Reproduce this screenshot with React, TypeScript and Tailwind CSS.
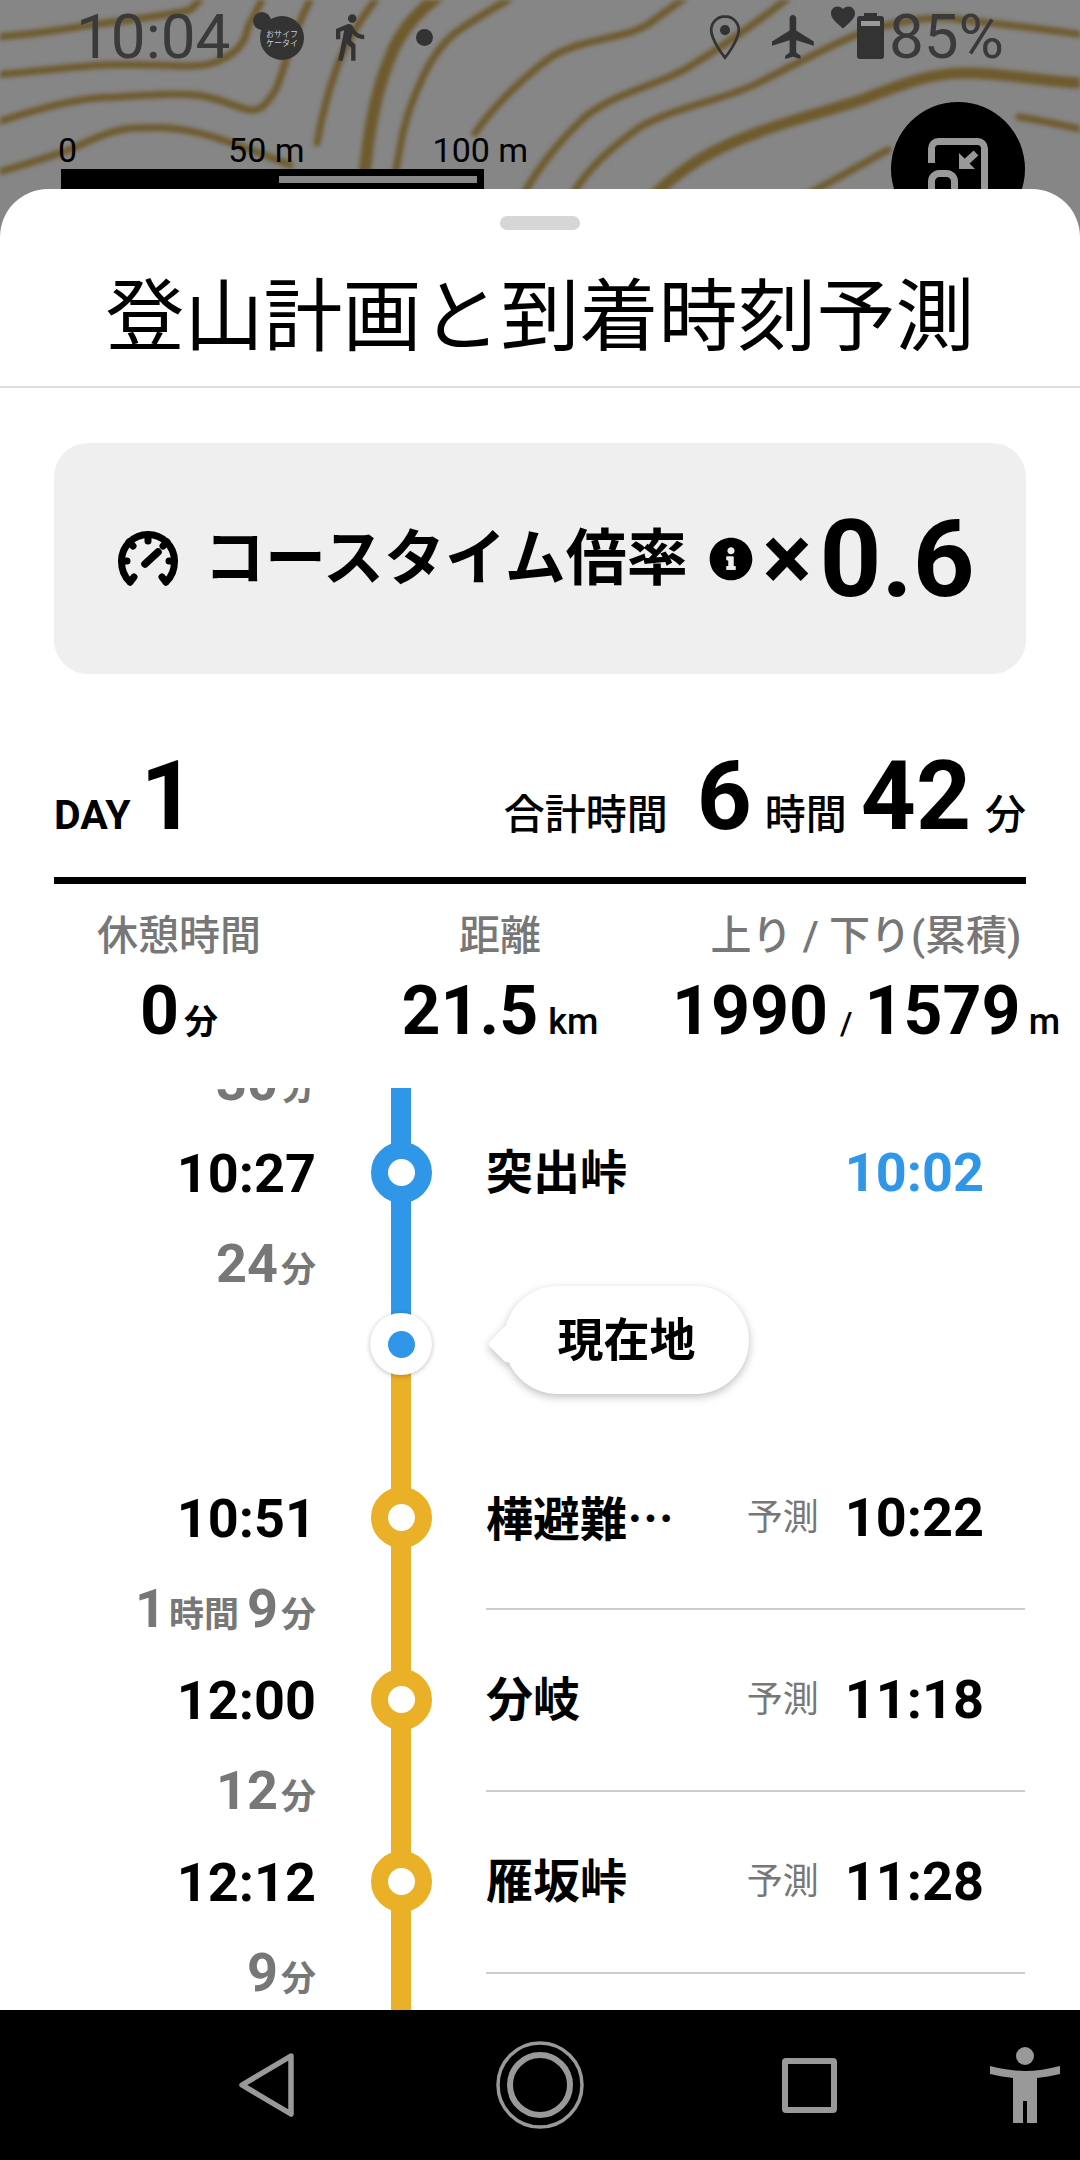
import React from "react";
import { FaInfoCircle } from "react-icons/fa";

type Stop = { arrive: string; name: string; predicted: string; blue?: boolean; more?: boolean };
type Part = { value?: string; unit?: string };

function Duration({ parts, color, divider }: { parts: Part[]; color: string; divider?: boolean }) {
    return (
        <div className="flex h-[91px] items-center">
            <div className="flex w-[316px] items-baseline justify-end pt-[4px] text-[#777777]">
                {parts.map((p, i) => (
                    <span key={i} className="flex items-baseline">
                        <span className="text-[54px] leading-[60px] font-bold">{p.value}</span>
                        <span className="ml-[3px] text-[35px] font-bold">{p.unit}</span>
                        {i < parts.length - 1 && <span className="w-[8px]" />}
                    </span>
                ))}
            </div>
            <div className="relative h-full w-[170px]">
                <div className={`absolute inset-y-0 left-[75px] w-[20px] ${color}`} />
            </div>
            {divider && <div className="h-[2px] w-[539px] bg-[#cccccc]" />}
        </div>
    );
}

function StopRow({ stop }: { stop: Stop }) {
    const line = stop.blue ? "bg-[#2f96e8]" : "bg-[#e9b028]";
    const ring = stop.blue ? "border-[#2f96e8]" : "border-[#e9b028]";
    return (
        <div className="flex h-[91px] items-center">
            <div className="w-[316px] pt-[2px] text-right text-[54px] leading-[64px] font-bold text-black">{stop.arrive}</div>
            <div className="relative flex h-full w-[170px] items-center justify-center">
                <div className={`absolute inset-y-0 left-[75px] w-[20px] ${line}`} />
                <div className={`relative h-[61px] w-[61px] rounded-full border-[17px] bg-white ${ring}`} />
            </div>
            <div className="flex w-[539px] items-center pr-[41px]">
                <div className="text-[47px] leading-[60px] font-bold text-black">
                    {stop.name}
                    {stop.more && <span className="font-['Noto_Sans_CJK_JP',sans-serif]">…</span>}
                </div>
                {stop.blue ? (
                    <div className="ml-auto text-[54px] leading-[64px] font-bold text-[#2f96e8]">{stop.predicted}</div>
                ) : (
                    <>
                        <div className="ml-auto text-[36px] leading-[50px] text-[#777777]">予測</div>
                        <div className="ml-[26px] text-[54px] leading-[64px] font-bold text-black">{stop.predicted}</div>
                    </>
                )}
            </div>
        </div>
    );
}

function MapBackground() {
    return (
        <svg className="absolute inset-0 blur-[2px]" width="1080" height="240" viewBox="0 0 1080 240" fill="none" stroke="#6e5a2c" strokeWidth="7" strokeLinecap="round">
            <path d="M-5 123C40 108 80 97 117 97C150 95 190 92 207 97C235 103 250 116 262 107C275 95 278 85 282 73C290 45 300 20 310 0" />
            <path d="M-5 173C25 165 45 158 69 150C95 138 115 128 138 128C165 126 190 130 207 135C240 145 265 155 290 165" />
            <path d="M-5 37C30 35 60 30 90 25C130 20 170 15 190 10L200 0" />
            <path d="M-5 75C30 72 70 67 103 65C150 62 190 70 213 63C235 55 245 45 248 27L262 0" />
            <path d="M365 170C370 120 378 85 393 50C405 25 420 10 440 -5" strokeWidth="12" />
            <path d="M396 170C402 135 405 120 413 100C425 70 435 50 455 33C480 15 500 5 516 -5" />
            <path d="M317 143C322 115 328 92 337 67C347 40 360 20 379 -5" />
            <path d="M475 133C495 105 520 80 551 57C590 35 630 40 654 20L689 -5" />
            <path d="M523 195C540 165 560 140 585 117C615 92 660 85 689 67C725 45 760 20 792 -5" />
            <path d="M572 195C590 165 615 145 640 127C680 105 725 100 758 83C800 62 830 45 861 33C900 20 935 15 964 20C1010 25 1050 30 1085 35" />
            <path d="M654 195C675 175 695 160 723 147C770 125 815 115 861 100C900 85 930 73 964 73C1010 73 1050 83 1085 83" strokeWidth="11" />
            <path d="M806 195C835 180 860 165 888 150" />
            <path d="M1019 117C1040 120 1060 125 1085 130" />
        </svg>
    );
}

function BearIcon() {
    return (
        <svg width="52" height="50" viewBox="0 0 52 50" fill="#333333">
            <circle cx="10" cy="9" r="9" />
            <circle cx="30" cy="26" r="22" />
            <text x="30" y="25" textAnchor="middle" fill="#cccccc" fontSize="8" fontFamily="'Noto Sans CJK JP', sans-serif">おサイフ</text>
            <text x="30" y="34" textAnchor="middle" fill="#cccccc" fontSize="8" fontFamily="'Noto Sans CJK JP', sans-serif">ケータイ</text>
        </svg>
    );
}

function StatusBar() {
    return (
        <div className="relative flex h-[74px] items-center pl-[76px] pr-[76px] text-[62px] leading-[74px] text-[#3a3a3a]">
            <span>10:04</span>
            <span className="ml-[22px]"><BearIcon /></span>
            <svg className="ml-[19px]" width="52" height="52" viewBox="0 0 24 24" fill="#333333">
                <path d="M13.5 5.5c1.1 0 2-.9 2-2s-.9-2-2-2-2 .9-2 2 .9 2 2 2zM9.8 8.9L7 23h2.1l1.8-8 2.1 2v6h2v-7.5l-2.1-2 .6-3C14.8 12 16.8 13 19 13v-2c-1.9 0-3.5-1-4.3-2.4l-1-1.6c-.4-.6-1-1-1.7-1-.3 0-.5.1-.8.1L6 8.3V13h2V9.6l1.8-.7" />
            </svg>
            <div className="ml-[41px] h-[17px] w-[17px] rounded-full bg-[#333333]" />
            <div className="ml-auto flex items-center">
                <svg width="34" height="46" viewBox="5 2 14 20" fill="none" stroke="#333333" strokeWidth="1.2">
                    <path d="M12 3C8.7 3 6 5.7 6 9c0 4.6 6 12 6 12s6-7.4 6-12c0-3.3-2.7-6-6-6z" />
                    <circle cx="12" cy="9" r="2.2" fill="#333333" stroke="none" />
                </svg>
                <svg className="ml-[30px]" width="44" height="44" viewBox="2 2 20 20" fill="#333333">
                    <path d="M21 16v-2l-8-5V3.5c0-.83-.67-1.5-1.5-1.5S10 2.67 10 3.5V9l-8 5v2l8-2.5V19l-2 1.5V22l3.5-1 3.5 1v-1.5L13 19v-5.5l8 2.5z" />
                </svg>
                <div className="relative ml-[41px] h-[43px] w-[27px] rounded-[3px] bg-[#333333]">
                    <div className="absolute left-[7px] top-[-3px] h-[4px] w-[13px] bg-[#333333]" />
                    <div className="absolute left-[4px] top-[5px] h-[5px] w-[19px] bg-[#999999]" />
                    <svg className="absolute left-[-26px] top-[-10px]" width="24" height="24" viewBox="2 3 20 19" fill="#333333">
                        <path d="M12 21.35l-1.45-1.32C5.4 15.36 2 12.28 2 8.5 2 5.42 4.42 3 7.5 3c1.74 0 3.41.81 4.5 2.09C13.09 3.81 14.76 3 16.5 3 19.58 3 22 5.42 22 8.5c0 3.78-3.4 6.86-8.55 11.54L12 21.35z" />
                    </svg>
                </div>
                <span className="ml-[5px]">85%</span>
            </div>
        </div>
    );
}

function MapArea() {
    return (
        <div className="relative h-[240px] overflow-hidden bg-[#868686]">
            <MapBackground />
            <StatusBar />
            <div className="relative ml-[58px] mt-[58px] w-[480px] text-[34px] leading-[36px] text-black">
                <div className="flex">
                    <span>0</span>
                    <span className="ml-[151px]">50 m</span>
                    <span className="ml-[128px]">100 m</span>
                </div>
                <div className="ml-[3px] mt-[1px] flex h-[40px] w-[423px] justify-end bg-black pr-[7px] pt-[7px]">
                    <div className="h-[7px] w-[198px] bg-[#888888]" />
                </div>
            </div>
            <div className="absolute left-[891px] top-[102px] h-[134px] w-[134px] rounded-full bg-black">
                <svg width="134" height="134" viewBox="0 0 134 134" fill="none" stroke="#999999" strokeWidth="7" strokeLinejoin="round">
                    <path d="M40.5 61V46.5a7 7 0 0 1 7-7h39a7 7 0 0 1 7 7V110" />
                    <rect x="40.5" y="71.5" width="23" height="40" rx="8" />
                    <path d="M85 51L73 62" strokeWidth="7" />
                    <path d="M68 51V67H84Z" strokeWidth="0" fill="#999999" />
                </svg>
            </div>
        </div>
    );
}

function GaugeIcon() {
    return (
        <svg width="60" height="56" viewBox="0 0 60 56" fill="none" stroke="black" strokeLinecap="round">
            <path d="M12 51C6.5 46 3.5 38.5 3.5 30C3.5 15.4 15.4 3.5 30 3.5C44.6 3.5 56.5 15.4 56.5 30C56.5 38.5 53.5 46 48 51" strokeWidth="7" />
            <path d="M30 4V10M11 11L15 15M49 11L45 15M4 30H9M56 30H51M12 51L16 46M48 51L44 46" strokeWidth="7" />
            <path d="M27 33L40 21" strokeWidth="7.5" />
        </svg>
    );
}

function BottomNav() {
    return (
        <div className="flex h-[150px] items-center bg-black">
            <svg className="ml-[238px]" width="58" height="66" viewBox="0 0 58 66" fill="none" stroke="#999999" strokeWidth="5.5" strokeLinejoin="round">
                <path d="M53 4L4 33L53 62Z" />
            </svg>
            <svg className="ml-[200px]" width="88" height="88" viewBox="0 0 88 88" fill="none" stroke="#999999">
                <circle cx="44" cy="44" r="42" strokeWidth="3.5" />
                <circle cx="44" cy="44" r="30" strokeWidth="6" />
            </svg>
            <div className="ml-[198px] h-[55px] w-[55px] rounded-[4px] border-[6px] border-[#999999]" />
            <svg className="ml-[153px]" width="70" height="76" viewBox="0 0 70 76" fill="#999999">
                <ellipse cx="35" cy="9" rx="9" ry="9" />
                <path d="M0 19C12 22 24 24 35 24C46 24 58 22 70 19V27C62 29 54 30 47 31V76H37V54H33V76H23V31C16 30 8 29 0 27Z" />
            </svg>
        </div>
    );
}

export default function App() {
    const stops: Stop[] = [
        { arrive: "10:51", name: "樺避難", more: true, predicted: "10:22" },
        { arrive: "12:00", name: "分岐", predicted: "11:18" },
        { arrive: "12:12", name: "雁坂峠", predicted: "11:28" },
    ];
    const gaps: Part[][] = [
        [{ value: "1", unit: "時間" }, { value: "9", unit: "分" }],
        [{ value: "12", unit: "分" }],
        [{ value: "9", unit: "分" }],
    ];

    return (
        <div className="flex h-[2160px] w-[1080px] flex-col overflow-hidden bg-white font-['Roboto','Noto_Sans_CJK_JP',sans-serif]">
            <MapArea />
            <div className="relative z-10 mt-[-51px] flex min-h-0 flex-1 flex-col rounded-t-[48px] bg-white">
                <div className="mx-auto mt-[27px] h-[14px] w-[80px] rounded-full bg-[#d6d6d6]" />
                <div className="h-[156px] pt-[32px] text-center text-[79px] leading-[112px] text-black">登山計画と到着時刻予測</div>
                <div className="h-[2px] bg-[#dddddd]" />

                <div className="mx-[54px] mt-[55px] flex h-[231px] items-center rounded-[34px] bg-[#efefef] pl-[64px]">
                    <GaugeIcon />
                    <span className="ml-[26px] text-[61px] leading-[80px] font-bold text-black">コースタイム倍率</span>
                    <FaInfoCircle className="ml-[21px] text-[44px] text-black" />
                    <span className="ml-[10px] text-[92px] leading-[80px] font-bold text-black">×</span>
                    <span className="ml-[8px] text-[108px] leading-[120px] font-bold text-black">0.6</span>
                </div>

                <div className="mx-[54px] flex h-[210px] items-baseline border-b-[7px] border-black pt-[74px] text-black">
                    <span className="text-[41px] leading-[96px] font-bold">DAY</span>
                    <span className="ml-[10px] text-[96px] leading-[96px] font-bold">1</span>
                    <span className="ml-auto text-[41px] font-medium">合計時間</span>
                    <span className="ml-[29px] text-[96px] leading-[96px] font-bold">6</span>
                    <span className="ml-[13px] text-[41px] font-medium">時間</span>
                    <span className="ml-[14px] text-[96px] leading-[96px] font-bold">42</span>
                    <span className="ml-[14px] text-[41px] font-medium">分</span>
                </div>

                <div className="flex h-[204px] whitespace-nowrap pl-[54px] pt-[28px]">
                    <div className="w-[250px] text-center">
                        <div className="text-[41px] leading-[48px] font-medium text-[#777777]">休憩時間</div>
                        <div className="mt-[13px] text-[68px] leading-[76px] font-bold text-black">
                            0<span className="ml-[5px] text-[34px]">分</span>
                        </div>
                    </div>
                    <div className="ml-[36px] w-[320px] text-center">
                        <div className="text-[41px] leading-[48px] font-medium text-[#777777]">距離</div>
                        <div className="mt-[13px] text-[68px] leading-[76px] font-bold text-black">
                            21.5<span className="ml-[10px] text-[36px] font-medium">km</span>
                        </div>
                    </div>
                    <div className="w-[412px] text-center">
                        <div className="text-[41px] leading-[48px] font-medium text-[#777777]">上り / 下り(累積)</div>
                        <div className="mt-[13px] text-[68px] leading-[76px] font-bold text-black">
                            1990<span className="mx-[12px] text-[32px] font-medium">/</span>1579<span className="ml-[8px] text-[36px] font-medium">m</span>
                        </div>
                    </div>
                </div>

                <div className="min-h-0 flex-1 overflow-hidden">
                    <div className="mt-[-52px]">
                        <Duration parts={[{ value: "30", unit: "分" }]} color="bg-[#2f96e8]" />
                        <StopRow stop={{ arrive: "10:27", name: "突出峠", predicted: "10:02", blue: true }} />
                        <Duration parts={[{ value: "24", unit: "分" }]} color="bg-[#2f96e8]" />

                        <div className="flex h-[70px] items-center">
                            <div className="w-[316px]" />
                            <div className="relative flex h-full w-[170px] items-center justify-center">
                                <div className="absolute left-[75px] top-0 h-1/2 w-[20px] bg-[#2f96e8]" />
                                <div className="absolute bottom-0 left-[75px] h-1/2 w-[20px] bg-[#e9b028]" />
                                <div className="relative flex h-[62px] w-[62px] items-center justify-center rounded-full bg-white shadow-[0_1px_5px_rgba(0,0,0,0.25)]">
                                    <div className="h-[27px] w-[27px] rounded-full bg-[#2f96e8]" />
                                </div>
                            </div>
                            <div className="relative mb-[8px] ml-[18px] flex h-[108px] w-[245px] items-center justify-center rounded-[54px] bg-white drop-shadow-[0_3px_4px_rgba(0,0,0,0.25)]">
                                <div className="absolute left-[-11px] top-[44px] h-[28px] w-[28px] rotate-45 rounded-[4px] bg-white" />
                                <span className="relative text-[46px] font-bold text-black">現在地</span>
                            </div>
                        </div>
                        <div className="flex h-[93px]">
                            <div className="ml-[391px] w-[20px] bg-[#e9b028]" />
                        </div>

                        {stops.map((stop, i) => (
                            <React.Fragment key={stop.name}>
                                <StopRow stop={stop} />
                                <Duration parts={gaps[i]} color="bg-[#e9b028]" divider />
                            </React.Fragment>
                        ))}
                    </div>
                </div>
                <BottomNav />
            </div>
        </div>
    );
}
